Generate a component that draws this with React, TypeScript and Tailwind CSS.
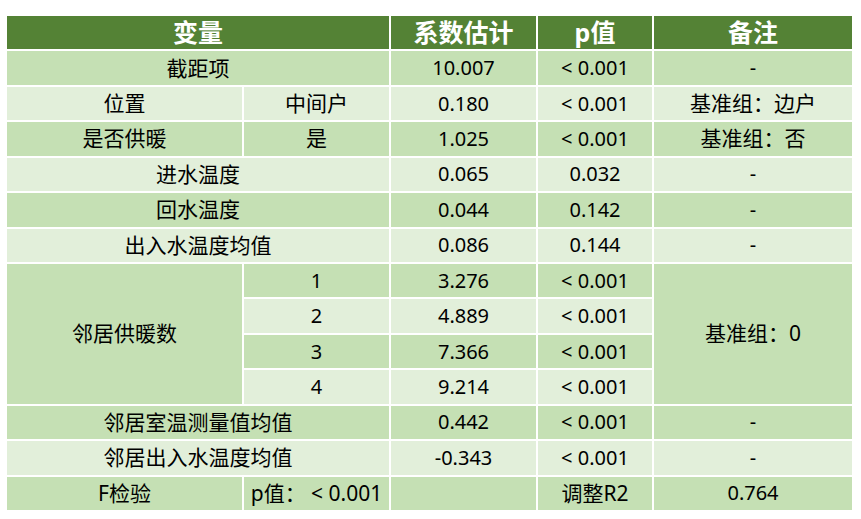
import React from 'react';

const DARK = 'bg-[#c5e0b4]';
const LIGHT = 'bg-[#e2efda]';

type CellProps = {
  children?: React.ReactNode;
  className?: string;
  zh?: boolean;
};

// chinese text runs a touch larger than the figures in the reference
const Cell: React.FC<CellProps> = ({ children, className = '', zh = false }) => (
  <div
    className={`flex items-center justify-center leading-none text-black ${zh ? 'text-[21px]' : 'text-[20px]'} ${className}`}
  >
    {children}
  </div>
);

const HeadCell: React.FC<CellProps> = ({ children, className = '' }) => (
  <div
    className={`flex items-center justify-center bg-[#548235] text-[25px] font-bold leading-none text-white ${className}`}
  >
    {children}
  </div>
);

// plain rows: label spans the two variable columns
const simpleRows = [
  { row: 'row-start-5', label: '进水温度', est: '0.065', p: '0.032', note: '-', bg: LIGHT },
  { row: 'row-start-6', label: '回水温度', est: '0.044', p: '0.142', note: '-', bg: DARK },
  { row: 'row-start-7', label: '出入水温度均值', est: '0.086', p: '0.144', note: '-', bg: LIGHT },
];

const neighborRows = [
  { row: 'row-start-8', level: '1', est: '3.276', bg: DARK },
  { row: 'row-start-9', level: '2', est: '4.889', bg: LIGHT },
  { row: 'row-start-10', level: '3', est: '7.366', bg: DARK },
  { row: 'row-start-11', level: '4', est: '9.214', bg: LIGHT },
];

export default function App() {
  return (
    <div
      className="min-h-screen bg-white pl-[7px] pt-[16px]"
      style={{ fontFamily: '"Noto Sans", "Noto Sans CJK SC", sans-serif' }}
    >
      <div className="grid h-[494px] w-[845px] grid-cols-[235px_145px_145px_114px_198px] grid-rows-[repeat(14,minmax(0,1fr))] gap-[2px] bg-white">
        {/* header */}
        <HeadCell className="col-span-2">变量</HeadCell>
        <HeadCell>系数估计</HeadCell>
        <HeadCell>p值</HeadCell>
        <HeadCell>备注</HeadCell>

        {/* 截距项 */}
        <Cell zh className={`col-span-2 ${DARK}`}>截距项</Cell>
        <Cell className={DARK}>10.007</Cell>
        <Cell className={DARK}>&lt; 0.001</Cell>
        <Cell className={DARK}>-</Cell>

        {/* 位置 */}
        <Cell zh className={LIGHT}>位置</Cell>
        <Cell zh className={LIGHT}>中间户</Cell>
        <Cell className={LIGHT}>0.180</Cell>
        <Cell className={LIGHT}>&lt; 0.001</Cell>
        <Cell zh className={LIGHT}>基准组：边户</Cell>

        {/* 是否供暖 */}
        <Cell zh className={DARK}>是否供暖</Cell>
        <Cell zh className={DARK}>是</Cell>
        <Cell className={DARK}>1.025</Cell>
        <Cell className={DARK}>&lt; 0.001</Cell>
        <Cell zh className={DARK}>基准组：否</Cell>

        {simpleRows.map((r) => (
          <React.Fragment key={r.label}>
            <Cell zh className={`col-span-2 ${r.row} ${r.bg}`}>{r.label}</Cell>
            <Cell className={`${r.row} ${r.bg}`}>{r.est}</Cell>
            <Cell className={`${r.row} ${r.bg}`}>{r.p}</Cell>
            <Cell className={`${r.row} ${r.bg}`}>{r.note}</Cell>
          </React.Fragment>
        ))}

        {/* 邻居供暖数, merged over four rows */}
        <Cell zh className={`col-start-1 row-start-8 row-span-4 ${DARK}`}>邻居供暖数</Cell>
        {neighborRows.map((r) => (
          <React.Fragment key={r.level}>
            <Cell className={`col-start-2 ${r.row} ${r.bg}`}>{r.level}</Cell>
            <Cell className={`col-start-3 ${r.row} ${r.bg}`}>{r.est}</Cell>
            <Cell className={`col-start-4 ${r.row} ${r.bg}`}>&lt; 0.001</Cell>
          </React.Fragment>
        ))}
        <Cell zh className={`col-start-5 row-start-8 row-span-4 ${DARK}`}>基准组：0</Cell>

        {/* 邻居均值 */}
        <Cell zh className={`col-span-2 row-start-12 ${DARK}`}>邻居室温测量值均值</Cell>
        <Cell className={`row-start-12 ${DARK}`}>0.442</Cell>
        <Cell className={`row-start-12 ${DARK}`}>&lt; 0.001</Cell>
        <Cell className={`row-start-12 ${DARK}`}>-</Cell>

        <Cell zh className={`col-span-2 row-start-13 ${LIGHT}`}>邻居出入水温度均值</Cell>
        <Cell className={`row-start-13 ${LIGHT}`}>-0.343</Cell>
        <Cell className={`row-start-13 ${LIGHT}`}>&lt; 0.001</Cell>
        <Cell className={`row-start-13 ${LIGHT}`}>-</Cell>

        {/* 检验 */}
        <Cell zh className={`row-start-14 ${DARK}`}>F检验</Cell>
        <Cell zh className={`row-start-14 ${DARK}`}>p值：&nbsp;&lt; 0.001</Cell>
        <Cell className={`row-start-14 ${DARK}`} />
        <Cell zh className={`row-start-14 ${DARK}`}>调整R2</Cell>
        <Cell className={`row-start-14 ${DARK}`}>0.764</Cell>
      </div>
    </div>
  );
}
